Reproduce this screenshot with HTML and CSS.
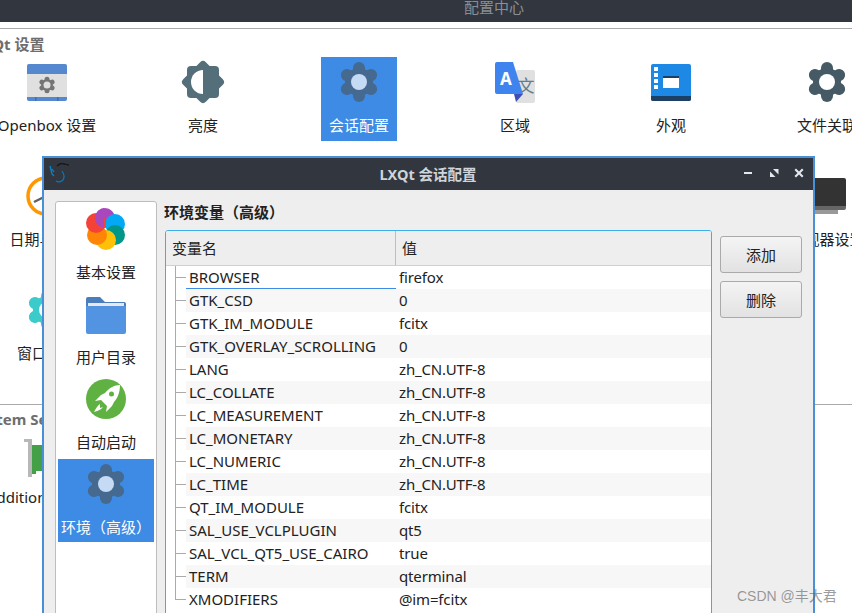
FILE: index.html
```html
<!DOCTYPE html>
<html lang="zh">
<head>
<meta charset="utf-8">
<title>配置中心</title>
<link rel="stylesheet" href="styles.css">
</head>
<body>
<svg class="defs" aria-hidden="true">
  <symbol id="gear" viewBox="0 0 48 48">
    <circle cx="24" cy="24" r="14"/>
    <rect x="18" y="4" width="12" height="40" rx="6"/>
    <rect x="18" y="4" width="12" height="40" rx="6" transform="rotate(60 24 24)"/>
    <rect x="18" y="4" width="12" height="40" rx="6" transform="rotate(120 24 24)"/>
  </symbol>
  <clipPath id="petal-clip"><rect x="0" y="0" width="22" height="24"/></clipPath>
</svg>
<div class="screen">
  <div class="topbar"><span class="topbar-title">配置中心</span></div>

  <section class="group">
    <h2 class="group-title group-title-qt">LXQt 设置</h2>
    <div class="tiles">
      <div class="tile">
        <svg class="icon" viewBox="0 0 48 48"><rect x="4" y="6" width="40" height="37" rx="2" fill="#e0e0e0"/><path d="M4 16V8a2 2 0 0 1 2-2h36a2 2 0 0 1 2 2v8z" fill="#5588cf"/><path d="M4 39h40v2a2 2 0 0 1-2 2H6a2 2 0 0 1-2-2z" fill="#5588cf"/><path d="M12 39h1.500v4H12zM34 39h1.500v4H34z" fill="#3f6fb0"/><g fill="#757575"><use href="#gear" x="14" y="17" width="20" height="20"/></g><circle cx="24" cy="27" r="3.500" fill="#e0e0e0"/></svg>
        <span class="label">Openbox 设置</span>
      </div>
      <div class="tile">
        <svg class="icon" viewBox="0 0 48 48"><g fill="#546e7a"><rect x="8" y="8" width="32" height="32" rx="4"/><rect x="8" y="8" width="32" height="32" rx="4" transform="rotate(45 24 24)"/></g><path d="M24 12a12 12 0 0 0 0 24z" fill="#fff"/></svg>
        <span class="label">亮度</span>
      </div>
      <div class="tile tile-on">
        <svg class="icon icon-gear-on"><use href="#gear"/><circle cx="24" cy="24" r="8"/></svg>
        <span class="label">会话配置</span>
      </div>
      <div class="tile">
        <svg class="icon" viewBox="0 0 48 48"><rect x="25" y="12" width="19" height="33" rx="2" fill="#e0e0e0"/><text x="35" y="34" class="glyph-wen">文</text><path d="M6 4h16l10 32H6a2 2 0 0 1-2-2V6a2 2 0 0 1 2-2z" fill="#3f84ee"/><path d="M23 36h9l-7 8z" fill="#3f4fb5"/><text x="15" y="27" class="glyph-a">A</text></svg>
        <span class="label">区域</span>
      </div>
      <div class="tile">
        <svg class="icon" viewBox="0 0 48 48"><rect x="4" y="6" width="40" height="37" rx="2" fill="#1e88e5"/><path d="M4 38h40v3a2 2 0 0 1-2 2H6a2 2 0 0 1-2-2z" fill="#1c3f66"/><path d="M7 9h4v4H7zM7 15h4v4H7zM7 21h4v4H7zM7 27h4v4H7z" fill="#fff"/><rect x="16" y="18" width="16" height="12" fill="#fff"/><rect x="16" y="18" width="16" height="2" fill="#1c3f66"/></svg>
        <span class="label">外观</span>
      </div>
      <div class="tile">
        <svg class="icon icon-gear-dark"><use href="#gear"/><circle cx="24" cy="24" r="8"/></svg>
        <span class="label">文件关联</span>
      </div>
      <div class="tile">
        <svg class="icon" viewBox="0 0 48 48"><circle cx="23" cy="24" r="18" fill="#fff" stroke="#ff9800" stroke-width="3.500"/><path d="M23 24l-12 6" stroke="#616161" stroke-width="2.500"/></svg>
        <span class="label">日期与时间</span>
      </div>
      <div class="tile"></div><div class="tile"></div><div class="tile"></div><div class="tile"></div>
      <div class="tile">
        <svg class="icon" viewBox="0 0 48 48"><path d="M3 6h38a2 2 0 0 1 2 2v26H3z" fill="#333"/><path d="M3 34h40v2a2 2 0 0 1-2 2H3z" fill="#666"/><rect x="3" y="38" width="32" height="4" fill="#999"/></svg>
        <span class="label">监视器设置</span>
      </div>
      <div class="tile">
        <svg class="icon icon-gear-teal"><use href="#gear"/><circle cx="24" cy="24" r="8"/></svg>
        <span class="label">窗口设置</span>
      </div>
    </div>
  </section>

  <section class="group group-system">
    <h2 class="group-title group-title-sys">System Settings</h2>
    <div class="tiles tiles-system">
      <div class="tile">
        <svg class="icon" viewBox="0 0 48 48"><path d="M1 9h8v38H5V12H1z" fill="#b8b8b8"/><path d="M9 15h32v26H13v3H9z" fill="#43a047"/></svg>
        <span class="label label-drivers">Additional Drivers</span>
      </div>
    </div>
  </section>

  <div class="dialog">
    <header class="dialog-bar">
      <svg class="bird" viewBox="0 0 20 22" fill="none"><path d="M1 3l2 8 2 2M3 6l2 3" stroke="#0a84c8" stroke-width="1.300"/><path d="M8 3c2-2 5-3 7-2 2 0 3 1 5 1" stroke="#14181d" stroke-width="1.300"/><path d="M13 8c2 3 3 6 1 9-2 2-5 2-7 1" stroke="#0a78b8" stroke-width="1.300"/></svg>
      <span class="dialog-title">LXQt 会话配置</span>
      <div class="win-buttons">
        <svg class="win-btn" viewBox="0 0 10 10"><path d="M1 4h8v2H1z"/></svg>
        <svg class="win-btn" viewBox="0 0 10 10"><path d="M4 1h5.500v5.500zM1 3.500L6.500 9H1z"/></svg>
        <svg class="win-btn" viewBox="0 0 10 10"><path d="M2 .5L5 3.500 8 .5 9.500 2 6.500 5 9.500 8 8 9.500 5 6.500 2 9.500.5 8 3.500 5 .5 2z"/></svg>
      </div>
    </header>
    <div class="dialog-body">
      <nav class="sidebar">
        <div class="tile">
          <svg class="icon" viewBox="0 0 48 48"><circle cx="23" cy="13" r="10" fill="#ab47bc"/><circle cx="33" cy="19" r="10" fill="#03a9f4"/><circle cx="33" cy="30" r="10" fill="#009688"/><circle cx="24" cy="35" r="10" fill="#ffc107"/><circle cx="15" cy="30" r="10" fill="#ff8506"/><circle cx="14" cy="18" r="10" fill="#f44336"/><circle cx="23" cy="13" r="10" fill="#ab47bc" clip-path="url(#petal-clip)"/></svg>
          <span class="label">基本设置</span>
        </div>
        <div class="tile">
          <svg class="icon" viewBox="0 0 48 48"><path d="M4 9a2 2 0 0 1 2-2h12l5 5h19a2 2 0 0 1 2 2v10H4z" fill="#4a7dbd"/><rect x="6" y="13" width="36" height="12" fill="#e8e8e8"/><path d="M4 16h40v26a2 2 0 0 1-2 2H6a2 2 0 0 1-2-2z" fill="#5294e2"/></svg>
          <span class="label">用户目录</span>
        </div>
        <div class="tile">
          <svg class="icon" viewBox="0 0 48 48"><circle cx="24" cy="24" r="20" fill="#5fb141"/><path d="M38 10C32 10 27 13 23 18L19 20 13 26 19 25 25 31 24 37 30 31 32 27C36 23 38 16 38 10z" fill="#fff"/><path d="M18 29c-3 2-5 6-6 8 3-1 7-2 9-5l-3 1z" fill="#fff"/><circle cx="29.500" cy="19" r="2.500" fill="#5fb141"/></svg>
          <span class="label">自动启动</span>
        </div>
        <div class="tile tile-on">
          <svg class="icon icon-gear-on"><use href="#gear"/><circle cx="24" cy="24" r="8"/></svg>
          <span class="label">环境（高级）</span>
        </div>
      </nav>
      <main class="main">
        <h1 class="main-title">环境变量（高级）</h1>
        <div class="table">
          <div class="thead"><div class="th th-name">变量名</div><div class="th">值</div></div>
          <div class="row"><span class="tree"></span><span class="name name-current">BROWSER</span><span class="value">firefox</span></div>
          <div class="row"><span class="tree"></span><span class="name">GTK_CSD</span><span class="value">0</span></div>
          <div class="row"><span class="tree"></span><span class="name">GTK_IM_MODULE</span><span class="value">fcitx</span></div>
          <div class="row"><span class="tree"></span><span class="name">GTK_OVERLAY_SCROLLING</span><span class="value">0</span></div>
          <div class="row"><span class="tree"></span><span class="name">LANG</span><span class="value">zh_CN.UTF-8</span></div>
          <div class="row"><span class="tree"></span><span class="name">LC_COLLATE</span><span class="value">zh_CN.UTF-8</span></div>
          <div class="row"><span class="tree"></span><span class="name">LC_MEASUREMENT</span><span class="value">zh_CN.UTF-8</span></div>
          <div class="row"><span class="tree"></span><span class="name">LC_MONETARY</span><span class="value">zh_CN.UTF-8</span></div>
          <div class="row"><span class="tree"></span><span class="name">LC_NUMERIC</span><span class="value">zh_CN.UTF-8</span></div>
          <div class="row"><span class="tree"></span><span class="name">LC_TIME</span><span class="value">zh_CN.UTF-8</span></div>
          <div class="row"><span class="tree"></span><span class="name">QT_IM_MODULE</span><span class="value">fcitx</span></div>
          <div class="row"><span class="tree"></span><span class="name">SAL_USE_VCLPLUGIN</span><span class="value">qt5</span></div>
          <div class="row"><span class="tree"></span><span class="name">SAL_VCL_QT5_USE_CAIRO</span><span class="value">true</span></div>
          <div class="row"><span class="tree"></span><span class="name">TERM</span><span class="value">qterminal</span></div>
          <div class="row"><span class="tree tree-last"></span><span class="name">XMODIFIERS</span><span class="value">@im=fcitx</span></div>
        </div>
      </main>
      <div class="actions">
        <button class="btn" type="button">添加</button>
        <button class="btn" type="button">删除</button>
      </div>
    </div>
  </div>

  <div class="watermark">CSDN @丰大君</div>
</div>
</body>
</html>
```

FILE: styles.css
```css
* { box-sizing: border-box; }
html, body { margin: 0; padding: 0; }
body {
  font-family: "Noto Sans", "Noto Sans CJK SC", sans-serif;
  font-size: 15px;
  color: #222;
  background: #fff;
}
.defs { position: absolute; width: 0; height: 0; }
.screen {
  position: relative;
  width: 852px;
  height: 613px;
  overflow: hidden;
  background: #fff;
}
.topbar {
  height: 22px;
  background: #31363f;
  margin-bottom: 6px;
  overflow: hidden;
  display: flex;
  justify-content: flex-end;
}
.topbar-title {
  width: 388px;
  margin-top: -3px;
  line-height: 20px;
  color: #8b8e94;
}
.group { border-top: 1px solid #aaa; padding-top: 5px; }
.group-system { margin-top: 5px; padding-top: 4px; }
.group-title {
  margin: 0;
  font-size: 15px;
  line-height: 20px;
  font-weight: 700;
  color: #6e6e6e;
  white-space: nowrap;
}
.group-title-qt { margin-left: -26px; }
.group-title-sys { margin-left: -28px; }
.tiles {
  display: grid;
  grid-template-columns: repeat(6, 156px);
  grid-auto-rows: 114px;
  justify-items: center;
  margin: 3px 0 0 -31px;
}
.tiles-system { margin-top: 0; }
.tile {
  width: 76px;
  height: 84px;
  display: flex;
  flex-direction: column;
  align-items: center;
}
.icon {
  flex: none;
  width: 48px;
  height: 48px;
  margin-top: 1px;
}
.label {
  margin-top: 9px;
  line-height: 20px;
  white-space: nowrap;
}
.label-drivers { margin-left: 6px; }
.tile-on { background: #3d8be5; color: #fff; }
.icon-gear-on { fill: #46698f; }
.icon-gear-on circle { fill: #c5daf5; }
.icon-gear-dark { fill: #455a64; }
.icon-gear-dark circle { fill: #fff; }
.icon-gear-teal { fill: #3ccbcb; }
.icon-gear-teal circle { fill: #fff; }
.glyph-wen { font-size: 17px; fill: #5f7d8c; text-anchor: middle; }
.glyph-a { font-size: 17px; font-weight: 700; fill: #fff; text-anchor: middle; }

.dialog {
  position: absolute;
  left: 42px;
  top: 156px;
  width: 773px;
  height: 470px;
  border: 2px solid #4a90d9;
  background: #eee;
  display: flex;
  flex-direction: column;
}
.dialog-bar {
  flex: none;
  height: 32px;
  background: #31363f;
  display: grid;
  grid-template-columns: 1fr auto 1fr;
  align-items: center;
  padding: 0 9px 0 5px;
}
.bird { width: 20px; height: 22px; }
.dialog-title {
  color: #cfd3da;
  font-size: 14.500px;
  font-weight: 700;
  line-height: 20px;
  margin-left: 3px;
}
.win-buttons {
  display: flex;
  gap: 15.500px;
  justify-content: flex-end;
  margin-top: -2px;
}
.win-btn { flex: none; width: 10px; height: 10px; fill: #e4e7ec; }
.dialog-body {
  flex: 1;
  display: flex;
  align-items: flex-start;
  padding: 11px 0 0 11px;
}
.sidebar {
  flex: none;
  width: 102px;
  height: 500px;
  background: #fff;
  border: 1px solid #bdbdbd;
  border-radius: 3px;
  padding: 2px;
  display: flex;
  flex-direction: column;
  align-items: stretch;
  gap: 2px;
}
.sidebar .tile { width: 96px; height: 83px; }
.main { flex: none; width: 548px; margin-left: 7px; }
.main-title {
  margin: 1px 0 8px;
  font-size: 15px;
  line-height: 20px;
  font-weight: 700;
  color: #222;
}
.table {
  margin-left: 1px;
  width: 547px;
  height: 500px;
  background: #fff;
  border: 1px solid #3daee9;
  border-radius: 3px;
}
.thead {
  display: flex;
  height: 35px;
  background: #eee;
  border-bottom: 1px solid #cfcfcf;
  border-radius: 2px 2px 0 0;
}
.th { padding-left: 6px; line-height: 35px; flex: 1; }
.th-name {
  flex: none;
  width: 230px;
  border-right: 1px solid #bdbdbd;
}
.row { display: flex; height: 23px; line-height: 23px; }
.tree {
  flex: none;
  width: 20px;
  background-color: #fff;
  background-image: linear-gradient(#aaa, #aaa), linear-gradient(#aaa, #aaa);
  background-repeat: no-repeat;
  background-position: 9px 0, 10px 11px;
  background-size: 1px 100%, 10px 1px;
}
.tree-last { background-size: 1px 12px, 10px 1px; }
.name { flex: none; width: 210px; padding-left: 3px; }
.name-current { border-bottom: 1px solid #3d8be5; line-height: 22px; }
.value { flex: 1; padding-left: 3px; letter-spacing: -.15px; }
.row:nth-child(odd) .name, .row:nth-child(odd) .value { background: #f7f7f7; }
.actions {
  flex: none;
  display: flex;
  flex-direction: column;
  gap: 8px;
  width: 82px;
  margin: 35px 0 0 8px;
}
.btn {
  height: 37px;
  padding: 0;
  font: inherit;
  color: #222;
  border: 1px solid #aaa;
  border-radius: 3px;
  background: linear-gradient(#f4f4f4, #e2e2e2);
}
.watermark {
  position: absolute;
  left: 737px;
  top: 586px;
  font-family: "Liberation Sans", "Noto Sans CJK SC", sans-serif;
  font-size: 14px;
  line-height: 20px;
  color: rgba(90, 90, 90, .6);
}
```
